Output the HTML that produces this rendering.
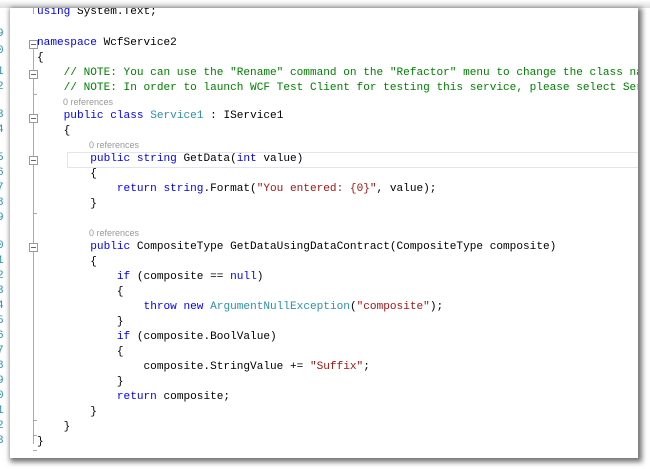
<!DOCTYPE html>
<html><head><meta charset="utf-8"><style>
html,body{margin:0;padding:0;width:650px;height:469px;overflow:hidden;background:#fff;}
.frame{position:absolute;left:10px;top:8px;width:628px;height:450px;background:#fff;box-shadow:2px 2px 5px 2px rgba(0,0,0,.55);overflow:hidden;}
.shade{position:absolute;left:0;top:0;width:650px;height:8px;background:linear-gradient(#fff,#ddd);}
.ln{position:absolute;left:-3px;font:11px "Liberation Mono",monospace;color:#2b91af;}
.code{position:absolute;left:27px;font:11.1px/15px "Liberation Mono",monospace;color:#000;white-space:pre;}
.ref{position:absolute;font:9px "Liberation Sans",sans-serif;color:#999;}
.k{color:#0000ff}.t{color:#2b91af}.c{color:#008000}.s{color:#a31515}
.box{position:absolute;left:19px;width:7px;height:7px;border:1px solid #999;background:#fff;}
.box:after{content:"";position:absolute;left:1px;top:3px;width:5px;height:1px;background:#666;}
.vl{position:absolute;left:23px;width:1px;background:#aaa;}
.tick{position:absolute;left:23px;width:4px;height:1px;background:#aaa;}
</style></head><body>
<div class="shade"></div>
<div class="frame">
<div style="position:absolute;left:57px;top:144px;width:580px;height:14px;border:1px solid #e4e4f0;"></div>
<div class="vl" style="top:0;height:6px"></div>
<div class="vl" style="top:41px;height:395px"></div>
<div class="vl" style="top:70px;height:16px"></div>
<div class="tick" style="top:86px"></div>
<div class="tick" style="top:205px"></div>
<div class="tick" style="top:412px"></div>
<div class="tick" style="top:427px"></div>
<div class="tick" style="top:442px"></div>
<div class="box" style="top:32px"></div>
<div class="box" style="top:62px"></div>
<div class="box" style="top:106px"></div>
<div class="box" style="top:148px"></div>
<div class="box" style="top:235px"></div>

<div class="code" style="top:-3px"><span class="k">using</span> System.Text;</div>
<div class="code" style="top:28px"><span class="k">namespace</span> WcfService2</div>
<div class="code" style="top:43px">{</div>
<div class="code c" style="top:58px">    // NOTE: You can use the "Rename" command on the "Refactor" menu to change the class name</div>
<div class="code c" style="top:73px">    // NOTE: In order to launch WCF Test Client for testing this service, please select Service1</div>
<div class="ref" style="left:53px;top:89px">0 references</div>
<div class="code" style="top:101px">    <span class="k">public class</span> <span class="t">Service1</span> : IService1</div>
<div class="code" style="top:116px">    {</div>
<div class="ref" style="left:79px;top:132px">0 references</div>
<div class="code" style="top:144px">        <span class="k">public string</span> GetData(<span class="k">int</span> value)</div>
<div class="code" style="top:159px">        {</div>
<div class="code" style="top:174px">            <span class="k">return string</span>.Format(<span class="s">"You entered: {0}"</span>, value);</div>
<div class="code" style="top:189px">        }</div>
<div class="ref" style="left:79px;top:220px">0 references</div>
<div class="code" style="top:232px">        <span class="k">public</span> CompositeType GetDataUsingDataContract(CompositeType composite)</div>
<div class="code" style="top:247px">        {</div>
<div class="code" style="top:262px">            <span class="k">if</span> (composite == <span class="k">null</span>)</div>
<div class="code" style="top:277px">            {</div>
<div class="code" style="top:292px">                <span class="k">throw new</span> <span class="t">ArgumentNullException</span>(<span class="s">"composite"</span>);</div>
<div class="code" style="top:307px">            }</div>
<div class="code" style="top:322px">            <span class="k">if</span> (composite.BoolValue)</div>
<div class="code" style="top:337px">            {</div>
<div class="code" style="top:352px">                composite.StringValue += <span class="s">"Suffix"</span>;</div>
<div class="code" style="top:367px">            }</div>
<div class="code" style="top:382px">            <span class="k">return</span> composite;</div>
<div class="code" style="top:397px">        }</div>
<div class="code" style="top:412px">    }</div>
<div class="code" style="top:427px">}</div>
</div>
<div class="ln" style="top:28px">9</div>
<div class="ln" style="top:45px">0</div>
<div class="ln" style="top:66px">1</div>
<div class="ln" style="top:81px">2</div>
<div class="ln" style="top:109px">3</div>
<div class="ln" style="top:124px">4</div>
<div class="ln" style="top:152px">5</div>
<div class="ln" style="top:167px">6</div>
<div class="ln" style="top:182px">7</div>
<div class="ln" style="top:197px">8</div>
<div class="ln" style="top:212px">9</div>
<div class="ln" style="top:240px">0</div>
<div class="ln" style="top:255px">1</div>
<div class="ln" style="top:270px">2</div>
<div class="ln" style="top:285px">3</div>
<div class="ln" style="top:300px">4</div>
<div class="ln" style="top:315px">5</div>
<div class="ln" style="top:330px">6</div>
<div class="ln" style="top:345px">7</div>
<div class="ln" style="top:360px">8</div>
<div class="ln" style="top:375px">9</div>
<div class="ln" style="top:390px">0</div>
<div class="ln" style="top:405px">1</div>
<div class="ln" style="top:420px">2</div>
<div class="ln" style="top:435px">3</div>
</body></html>
